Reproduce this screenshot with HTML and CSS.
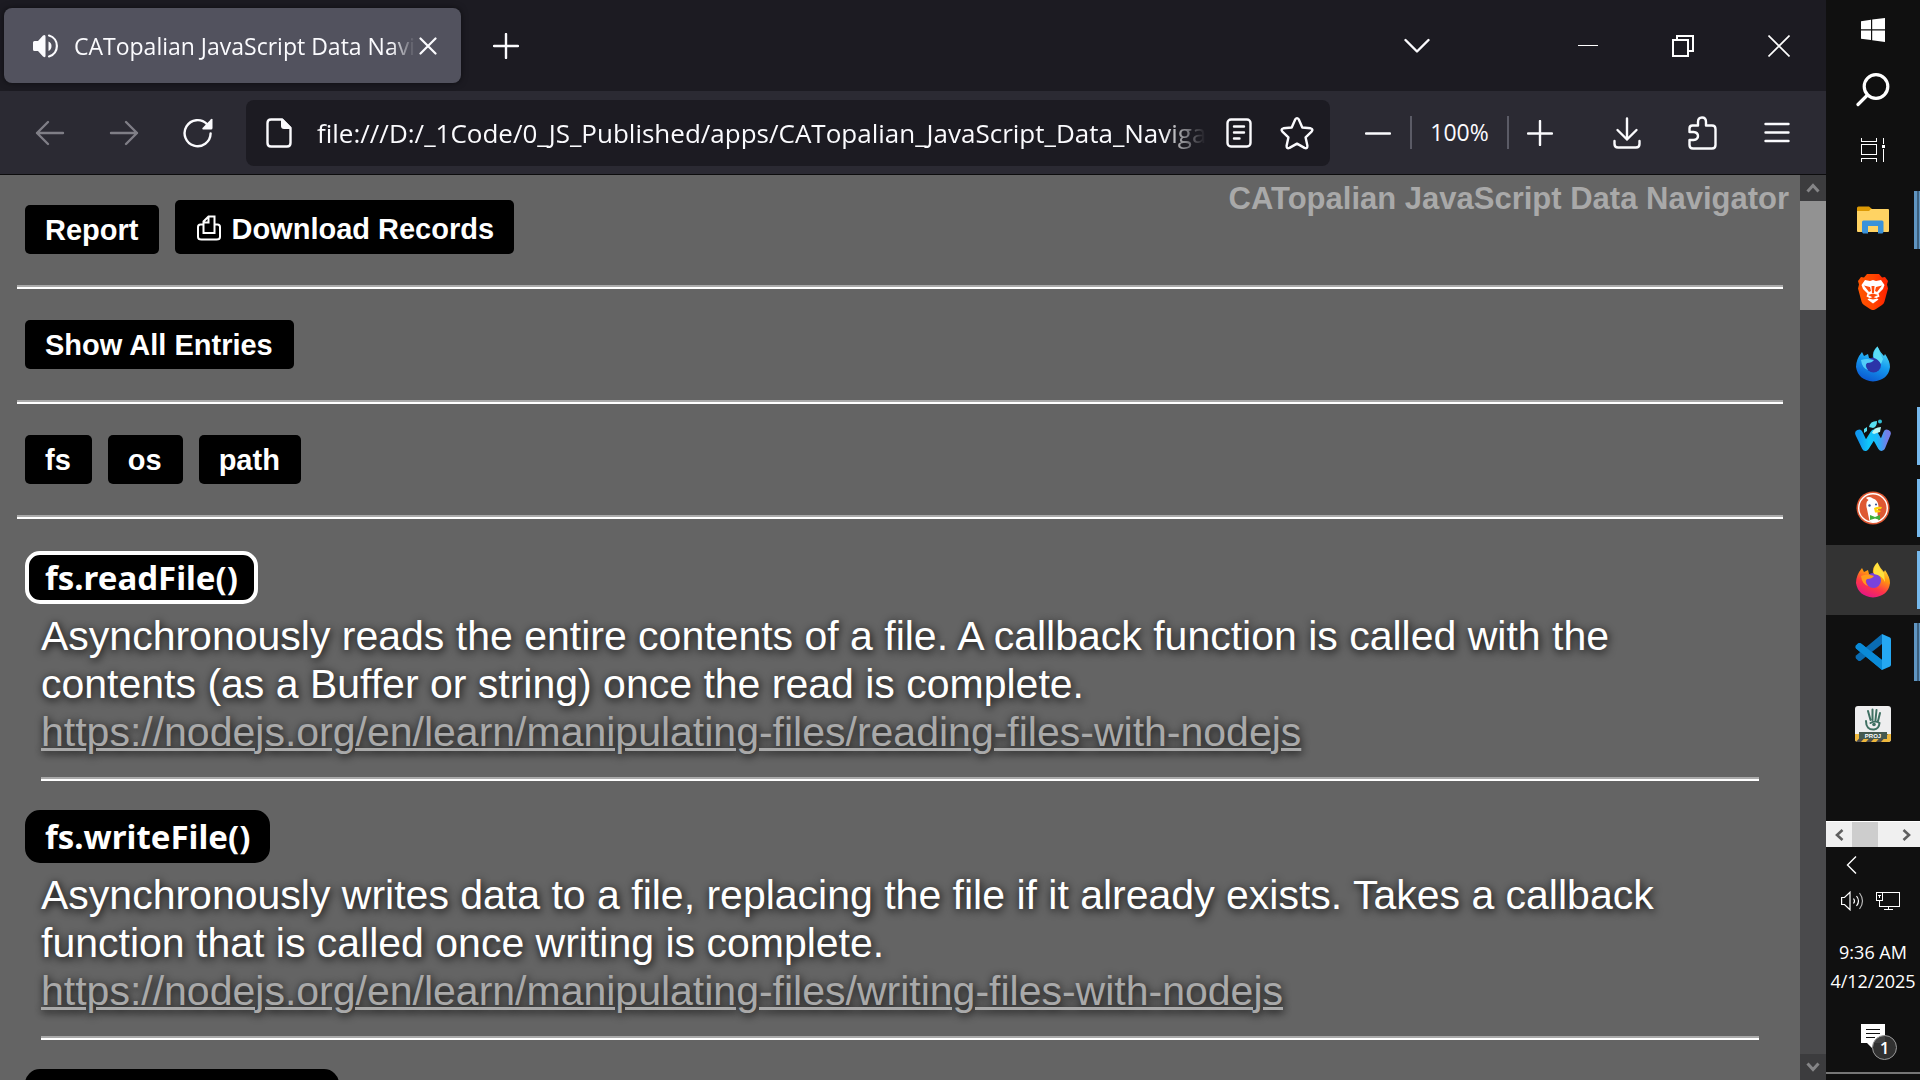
FILE: index.html
```html
<!DOCTYPE html>
<html lang="en">
<head>
<meta charset="utf-8">
<title>CATopalian JavaScript Data Navigator</title>
<link rel="stylesheet" href="styles.css">
</head>
<body>
<div class="browser">
  <header class="tabbar">
    <div class="tab">
      <svg class="ic" width="26" height="26" viewBox="0 0 26 26" aria-hidden="true"><path d="M0 9.500Q0 8 1.500 8H5L10 2.500Q12.500 1 12.500 3.500V23Q12.500 25 10 23.500L5 18H1.500Q0 18 0 16.500Z" fill="#fbfbfe"/><path d="M15.500 8.500v9.500q3-1.500 3-5t-3-4.500Z" fill="#fbfbfe"/><path d="M16 2.500c10.500 3 10.500 18 0 21" fill="none" stroke="#fbfbfe" stroke-width="2.200" stroke-linecap="round"/></svg>
      <span class="tab-title">CATopalian JavaScript Data Navigator</span>
      <button class="bare" aria-label="Close tab"><svg class="ic" width="18" height="18" viewBox="0 0 18 18"><path d="M1.500 1.500l15 15M16.500 1.500l-15 15" stroke="#fbfbfe" stroke-width="2.200" stroke-linecap="round"/></svg></button>
    </div>
    <button class="bare newtab" aria-label="New tab"><svg class="ic" width="26" height="26" viewBox="0 0 26 26"><path d="M13 1v24M1 13h24" stroke="#fbfbfe" stroke-width="2.400" stroke-linecap="round"/></svg></button>
    <div class="window-buttons">
      <button class="bare" aria-label="List all tabs"><svg class="ic" width="26" height="16" viewBox="0 0 26 16"><path d="M1.500 2l11.500 11.500L24.500 2" fill="none" stroke="#fbfbfe" stroke-width="2.400" stroke-linecap="round" stroke-linejoin="round"/></svg></button>
      <button class="bare push" aria-label="Minimize"><svg class="ic" width="20" height="20" viewBox="0 0 20 20"><path d="M0 9.500h20" stroke="#fff"/></svg></button>
      <button class="bare" aria-label="Restore"><svg class="ic" width="22" height="22" viewBox="0 0 22 22" fill="none" stroke="#fff" stroke-width="2"><path d="M1 5h15v16H1zM5 5V1h16v15h-5"/></svg></button>
      <button class="bare" aria-label="Close"><svg class="ic" width="22" height="22" viewBox="0 0 22 22"><path d="M.5.5l21 21M21.500.5l-21 21" stroke="#fff" stroke-width="1.600"/></svg></button>
    </div>
  </header>

  <nav class="toolbar" aria-label="Navigation">
    <div class="nav-buttons">
      <button class="bare" aria-label="Back" disabled><svg class="ic" width="30" height="26" viewBox="0 0 30 26" fill="none" stroke="#7f7e86" stroke-width="2.400" stroke-linecap="round" stroke-linejoin="round"><path d="M28 13H2M13 2L2 13l11 11"/></svg></button>
      <button class="bare" aria-label="Forward" disabled><svg class="ic" width="30" height="26" viewBox="0 0 30 26" fill="none" stroke="#7f7e86" stroke-width="2.400" stroke-linecap="round" stroke-linejoin="round"><path d="M2 13h26M17 2l11 11-11 11"/></svg></button>
      <button class="bare" aria-label="Reload"><svg class="ic" width="30" height="30" viewBox="0 0 30 30"><path d="M27.600 15.500A13 13 0 1 1 24 6.200" fill="none" stroke="#fbfbfe" stroke-width="2.400" stroke-linecap="round"/><path d="M29.500 1.500V10q0 1.500-1.500 1.500H20q-1.200-.5-.5-1.500L28 1.200q1-.8 1.500.3Z" fill="#fbfbfe"/></svg></button>
    </div>
    <div class="urlbar">
      <svg class="ic" width="26" height="30" viewBox="0 0 26 30" aria-hidden="true"><path d="M5 1.500h11L24.500 10v15q0 3.500-3.500 3.500H5q-3.500 0-3.500-3.500V5q0-3.500 3.500-3.500Z" fill="none" stroke="#fbfbfe" stroke-width="2.400"/><path d="M15 1h2l8 8v2h-7q-3 0-3-3Z" fill="#fbfbfe"/></svg>
      <input class="url" type="text" aria-label="Address" value="file:///D:/_1Code/0_JS_Published/apps/CATopalian_JavaScript_Data_Navigator/index.html">
      <button class="bare" aria-label="Reader view"><svg class="ic" width="26" height="30" viewBox="0 0 26 30" fill="none" stroke="#fbfbfe" stroke-width="2.400" stroke-linecap="round"><rect x="1.500" y="1.500" width="23" height="27" rx="3.500"/><path d="M8 8.500h10M8 14.500h10M8 20.500h5.500"/></svg></button>
      <button class="bare" aria-label="Bookmark this page"><svg class="ic" width="34" height="34" viewBox="0 0 34 34"><path d="M15.200 3.500Q17 .8 18.800 3.500L22.300 11.500 30.600 12.300Q33.600 13 31.600 15.600L25.600 21.400 27.400 29.800Q27.500 33 24.500 31.900L17 27.600 9.500 31.900Q6.500 33 6.600 29.800L8.400 21.400 2.400 15.600Q.4 13 3.400 12.300L11.700 11.500Z" fill="none" stroke="#fbfbfe" stroke-width="2.400" stroke-linejoin="round"/></svg></button>
    </div>
    <div class="zoom">
      <button class="bare" aria-label="Zoom out"><svg class="ic" width="26" height="26" viewBox="0 0 26 26"><path d="M1 13.500h24" stroke="#fbfbfe" stroke-width="2.400" stroke-linecap="round"/></svg></button>
      <button class="bare percent">100%</button>
      <button class="bare" aria-label="Zoom in"><svg class="ic" width="26" height="26" viewBox="0 0 26 26"><path d="M13 1v24M1 13.500h24" stroke="#fbfbfe" stroke-width="2.400" stroke-linecap="round"/></svg></button>
    </div>
    <div class="tools">
      <button class="bare" aria-label="Downloads"><svg class="ic" width="28" height="32" viewBox="0 0 28 32" fill="none" stroke="#fbfbfe" stroke-width="2.400" stroke-linecap="round" stroke-linejoin="round"><path d="M14 1.500v21M4.500 13l9.500 9.500 9.500-9.500M1.500 24v3q0 3.500 3.500 3.500h18q3.500 0 3.500-3.500v-3"/></svg></button>
      <button class="bare" aria-label="Extensions"><svg class="ic" width="29" height="34" viewBox="0 0 29 34" fill="none" stroke="#fbfbfe" stroke-width="2.400" stroke-linejoin="round"><path d="M4.500 9.500H10V6q0-4.500 4-4.500T18 6v3.500h6q3.500 0 3.500 3.500v16q0 3.500-3.500 3.500H5q-3.500 0-3.500-3.500V24H5.500q4.500-.5 4.500-4t-4.500-4H1.500V12.500q0-3 3-3Z"/></svg></button>
      <button class="bare" aria-label="Open application menu"><svg class="ic" width="26" height="22" viewBox="0 0 26 22"><path d="M1.500 2h23M1.500 10.500h23M1.500 19h23" stroke="#fbfbfe" stroke-width="2.400" stroke-linecap="round"/></svg></button>
    </div>
  </nav>

  <div class="viewport">
    <main class="page">
      <div class="page-head">
        <div class="row">
          <button class="btn">Report</button>
          <button class="btn download"><svg class="ic" width="24" height="28" viewBox="0 0 24 28" fill="none" stroke="#fff" stroke-width="2" aria-hidden="true"><path d="M6 9.500H3.500Q1 9.500 1 12v10q0 2.500 3.500 2.500h15q3.500 0 3.500-2.500V12q0-2.500-2.500-2.500H18M6.500 18V6.500l5-5H17.500V18ZM7 7.500h4.500V2"/></svg>Download Records</button>
        </div>
        <h1 class="title">CATopalian JavaScript Data Navigator</h1>
      </div>
      <hr class="rule">
      <div class="row group"><button class="btn">Show All Entries</button></div>
      <hr class="rule">
      <div class="row group"><button class="btn">fs</button><button class="btn">os</button><button class="btn">path</button></div>
      <hr class="rule">
      <div class="entries">
        <section class="entry">
          <button class="name selected">fs.readFile()</button>
          <p class="text">Asynchronously reads the entire contents of a file. A callback function is called with the contents (as a Buffer or string) once the read is complete.<br><a href="https://nodejs.org/en/learn/manipulating-files/reading-files-with-nodejs">https://nodejs.org/en/learn/manipulating-files/reading-files-with-nodejs</a></p>
          <hr class="rule inner">
        </section>
        <section class="entry">
          <button class="name">fs.writeFile()</button>
          <p class="text">Asynchronously writes data to a file, replacing the file if it already exists. Takes a callback function that is called once writing is complete.<br><a href="https://nodejs.org/en/learn/manipulating-files/writing-files-with-nodejs">https://nodejs.org/en/learn/manipulating-files/writing-files-with-nodejs</a></p>
          <hr class="rule inner">
        </section>
        <section class="entry">
          <button class="name next" aria-label="Next entry"></button>
        </section>
      </div>
    </main>
    <div class="scrollbar">
      <button class="bare arrow" aria-label="Scroll up"><svg class="ic" width="14" height="12" viewBox="0 0 14 12"><path d="M1.500 9.500L7 3.500l5.500 6" fill="none" stroke="#858587" stroke-width="3"/></svg></button>
      <div class="thumb"></div>
      <button class="bare arrow end" aria-label="Scroll down"><svg class="ic" width="14" height="12" viewBox="0 0 14 12"><path d="M1.500 2.500L7 8.500l5.500-6" fill="none" stroke="#858587" stroke-width="3"/></svg></button>
    </div>
  </div>
</div>

<aside class="taskbar" aria-label="Taskbar">
  <div class="system">
    <button class="bare" aria-label="Start"><svg class="ic" width="24" height="24" viewBox="0 0 24 24" fill="#fff"><path d="M0 3.200L10 1.800V11.300H0zM11.200 1.600L24 0v11.300H11.200zM0 12.500h10V22L0 20.800zM11.200 12.500H24V24l-12.800-1.700z"/></svg></button>
    <button class="bare" aria-label="Search"><svg class="ic" width="34" height="34" viewBox="0 0 34 34" fill="none" stroke="#fff" stroke-width="3.200"><circle cx="20" cy="13.500" r="11.800"/><path d="M11.500 22L2 31.500" stroke-linecap="round"/></svg></button>
    <button class="bare" aria-label="Task view"><svg class="ic" width="24" height="24" viewBox="0 0 24 24" fill="none" stroke="#fff" shape-rendering="crispEdges"><path d="M.5 0v3.500h15V0M.5 6.500h15v10H.5zM.5 24v-3.500h15V24M22.500 0v6M22.500 11v13"/><path d="M21 7h3v3h-3z" fill="#fff" stroke="none"/></svg></button>
  </div>
  <div class="apps">
    <button class="bare app multi" aria-label="File Explorer"><svg class="ic" width="36" height="36" viewBox="0 0 36 36"><path d="M2 6q0-1.500 1.500-1.500H14L17 7v4H2Z" fill="#dd9a05"/><path d="M2 9h12l2-2h17q1 0 1 1v21q0 1-1 1H3q-1 0-1-1Z" fill="#ffd363"/><path d="M7 30V20q0-1.500 1.500-1.500h18.500q1.500 0 1.500 1.500v10l-1 1.500h-4.500V24h-10v7.500H8Z" fill="#3a92da"/></svg></button>
    <button class="bare app" aria-label="Brave"><svg class="ic" width="36" height="36" viewBox="0 0 36 36"><defs><linearGradient id="br"><stop stop-color="#ff5601"/><stop offset=".5" stop-color="#ff4500"/><stop offset="1" stop-color="#ff2000"/></linearGradient></defs><path d="M12 0h12l3 3.500 3-.5 3 4-1 3.500 1 4-3.500 13q-.5 2-2.500 3.500l-6 4-3 1.500-3-1.500-6-4Q7 29.500 6.500 27.500L3 14.500l1-4L3 7l3-4 3 .5Z" fill="url(#br)"/><path d="M10 6l5 1 3-1 3 1 5-1 3.500 5-1.500 4-4.500 4.500 1 3-3 1.500 2 1.500-5.500 4-5.500-4 2-1.500-3-1.500 1-3L8 15l-1.500-4Z" fill="#fff"/><path d="M9 11.500l6 1.500 1 4-2 1zM27 11.500l-6 1.500-1 4 2 1zM16.500 12h3l-.5 7h-2zM13 21l5-1.500 5 1.500-5 2.500zM13.500 24.500l4.500-1.500 4.500 1.500-4.500 1z" fill="#ff4a0a"/></svg></button>
    <button class="bare app" aria-label="Firefox Developer Edition"><svg class="ic" width="36" height="36" viewBox="0 0 36 36"><defs><linearGradient id="fd" x1=".8" y1="0" x2=".4" y2="1"><stop stop-color="#61e5f5"/><stop offset=".5" stop-color="#169df0"/><stop offset="1" stop-color="#0b5ad2"/></linearGradient></defs><path d="M7 6l2 4 4-2 1 4h4q-1-7 4.500-11.500Q25 6 29 10l1-2q5 7 5 13-1.500 13-17 14.500Q3 34 1 21 1 13 7 6Z" fill="url(#fd)"/><circle cx="18.500" cy="19" r="7.500" fill="#2b35a8"/><path d="M6 14q6-2 13 0-2 3-7 3-3 3 1 7-6-2-7-10Z" fill="#52cdfa"/><path d="M19 12q-1-7 3.500-11.500 2 6 5.500 12.500l-2 5q-3-5-7-6Z" fill="#5bdcf8"/></svg></button>
    <button class="bare app running" aria-label="Waterfox"><svg class="ic" width="36" height="36" viewBox="0 0 36 36"><defs><linearGradient id="wf"><stop stop-color="#1198ef"/><stop offset=".35" stop-color="#10c7fb"/><stop offset=".65" stop-color="#1abafa"/><stop offset="1" stop-color="#747de8"/></linearGradient></defs><path d="M4 15.500L10.500 29 19 15.500 26.500 29 32 15.500" fill="none" stroke="url(#wf)" stroke-width="7.500" stroke-linecap="round" stroke-linejoin="round"/><path d="M17 15q2-6 9-6l-1 5-6 2Z" fill="#b8f8f6"/><path d="M14 9q1-6 8-6 0 6-4 7ZM9 11l3-2v4l-3 2Z" fill="#57dff1"/><circle cx="25" cy="3.500" r="2" fill="#31bdd4"/></svg></button>
    <button class="bare app running" aria-label="DuckDuckGo"><svg class="ic" width="36" height="36" viewBox="0 0 36 36"><circle cx="18" cy="18" r="16.500" fill="#de5833"/><circle cx="18" cy="18" r="14.300" fill="none" stroke="#fff" stroke-width="1.400"/><path d="M11 8q3-2 7 .500 5 1.500 5.500 7.500l-1 7 1 9q-5 1.500-9-1L12 19q-2-7 1.500-9Z" fill="#fff"/><path d="M19 18q4-2 8-1l-1 2-5 .5 5 1.500q-1 2-6 1.500Z" fill="#fdd20a"/><circle cx="14.500" cy="15.500" r="1.200" fill="#2d4f8e"/><circle cx="21" cy="14.500" r="1" fill="#2d4f8e"/><path d="M15 25l5 2 5-2v5l-5-1.500-5 1.500Z" fill="#3fae3b"/></svg></button>
    <button class="bare app running active" aria-label="Firefox"><svg class="ic" width="36" height="36" viewBox="0 0 36 36"><defs><linearGradient id="ff" x1=".8" y1="0" x2=".35" y2="1"><stop stop-color="#fff44f"/><stop offset=".4" stop-color="#ff980e"/><stop offset=".7" stop-color="#ff3647"/><stop offset="1" stop-color="#e31587"/></linearGradient></defs><path d="M7 6l2 4 4-2 1 4h4q-1-7 4.500-11.500Q25 6 29 10l1-2q5 7 5 13-1.500 13-17 14.500Q3 34 1 21 1 13 7 6Z" fill="url(#ff)"/><circle cx="18.500" cy="18.500" r="7.500" fill="#7a42dc"/><path d="M6 14q6-3 13 0-2 3-7 3-3 3 1 7-6-2-7-10Z" fill="#ff9b1c"/><path d="M19 12q-1-7 3.500-11.500Q24 7 29 11l1 9q-3-7-11-8Z" fill="#ffe13e"/></svg></button>
    <button class="bare app multi" aria-label="Visual Studio Code"><svg class="ic" width="36" height="36" viewBox="0 0 36 36"><path d="M27 36V26L6 9.500Q4.500 8.500 3 9.500L1 11.500Q0 13 1 14.500Z" fill="#0584cf"/><path d="M27 0v10L6 26.500q-1.500 1-3 0L1 24.500Q0 23 1 21.500Z" fill="#0a6cb2"/><path d="M1 14.500Q0 13 1 11.500L3 9.500q1.500-1 3 0L27 26v10Z" fill="#0a8bd8"/><path d="M27 0l8 3.500q1 .5 1 2v25q0 1.500-1 2L27 36Z" fill="#25a8f2"/></svg></button>
    <button class="bare app" aria-label="Project viewer"><svg class="ic" width="36" height="36" viewBox="0 0 36 36"><rect width="36" height="36" rx="3" fill="#eeeeef"/><path d="M0 28h36v5q0 3-3 3H3q-3 0-3-3Z" fill="#efb83c"/><path d="M1 36l7-8h5l-7 8zM11 36l7-8h5l-7 8zM21 36l7-8h5l-7 8z" fill="#4b4b4b"/><rect x="4" y="26" width="28" height="7" fill="#45594f"/><g fill="none" stroke="#3f7062" stroke-linecap="round" stroke-width="2"><path d="M13 5l2.500 9M17.500 3.500V14M21.500 4L20.500 14M25 7l-2 8M11 15q0 9 8 8.500 5-.5 5.500-6.500-4-3-9 0"/></g><circle cx="19" cy="18.500" r="1.800" fill="#3f7062"/><text x="18" y="32" text-anchor="middle" class="proj">PROJ</text></svg></button>
  </div>
  <div class="hscroll">
    <button class="bare harrow" aria-label="Scroll left"><svg class="ic" width="10" height="12" viewBox="0 0 10 12"><path d="M8.500 1L3 6l5.500 5" fill="none" stroke="#5f5f5f" stroke-width="2.600"/></svg></button>
    <div class="hthumb"></div>
    <button class="bare harrow end" aria-label="Scroll right"><svg class="ic" width="10" height="12" viewBox="0 0 10 12"><path d="M1.500 1L7 6l-5.500 5" fill="none" stroke="#5f5f5f" stroke-width="2.600"/></svg></button>
  </div>
  <div class="tray">
    <button class="bare more" aria-label="Show hidden icons"><svg class="ic" width="11" height="18" viewBox="0 0 11 18"><path d="M10 .5L1.500 9l8.500 8.500" fill="none" stroke="#fff" stroke-width="1.400"/></svg></button>
    <div class="status">
      <button class="bare" aria-label="Volume"><svg class="ic" width="23" height="20" viewBox="0 0 23 20" fill="none" stroke="#fff" stroke-width="1.200"><path d="M.6 6.500H3.500L9 1.200v17.600L3.500 13.500H.6Z"/><path d="M12.500 7.500q2 2.500 0 5M15.500 5q4 5 0 10" /><path d="M18.500 2q6 8 0 16" opacity=".7"/></svg></button>
      <button class="bare" aria-label="Network"><svg class="ic" width="24" height="20" viewBox="0 0 24 20" fill="none" stroke="#fff" shape-rendering="crispEdges"><path d="M6.500 1.500h17v14H3.500V9.500M.5 1.500h6v8H.5zM2 4.500h3M3.500 4v3M12.500 16v2.500M8 18.500h9"/></svg></button>
    </div>
    <div class="clock"><span>9:36 AM</span><span>4/12/2025</span></div>
    <button class="bare notify" aria-label="Notifications"><svg class="ic" width="24" height="26" viewBox="0 0 24 26"><path d="M0 0h24v19H13l-2 5-5-5H0Z" fill="#fff"/><path d="M5 5.500h14M5 9.500h14M5 13.500h9" stroke="#101010"/></svg><span class="badge">1</span></button>
  </div>
  <div class="desktop-edge"></div>
</aside>
</body>
</html>
```
FILE: styles.css
```css
* { box-sizing: border-box; }
body {
  margin: 0;
  height: 100vh;
  display: grid;
  grid-template-columns: minmax(0, 1fr) 94px;
  overflow: hidden;
  background: #101010;
  color: #fbfbfe;
  font-family: "Open Sans", "Noto Sans", sans-serif;
}
.ic { display: block; flex: none; }
.bare {
  margin: 0;
  padding: 0;
  border: 0;
  background: none;
  color: inherit;
  font: inherit;
}

/* Browser chrome */
.browser { display: flex; flex-direction: column; min-width: 0; height: 100vh; }
.tabbar { display: flex; align-items: center; height: 91px; flex: none; padding-left: 4px; background: #1c1b22; }
.tab {
  display: flex;
  align-items: center;
  width: 457px;
  height: 75px;
  padding: 0 24px 0 29px;
  border-radius: 8px;
  background: #52525e;
  box-shadow: 0 0 6px #0008;
}
.tab-title {
  flex: 1;
  min-width: 0;
  margin-left: 15px;
  overflow: hidden;
  white-space: nowrap;
  font-size: 23px;
  line-height: 32px;
  mask-image: linear-gradient(to left, transparent, #000 24px);
}
.tab .bare { margin-left: 4px; }
.newtab { margin-left: 32px; }
.window-buttons { flex: 1; display: flex; justify-content: flex-end; align-items: center; gap: 74px; padding-right: 36px; }
.push { margin-left: 74px; }

.toolbar { display: flex; align-items: center; height: 84px; flex: none; border-bottom: 1px solid #0c0c0d; background: #2b2a33; }
.nav-buttons { display: flex; align-items: center; gap: 44px; padding: 0 33px 0 35px; }
.urlbar {
  flex: 1;
  min-width: 0;
  display: flex;
  align-items: center;
  height: 66px;
  padding: 0 16px 0 20px;
  border-radius: 8px;
  background: #1c1b22;
}
.url {
  flex: 1;
  min-width: 0;
  margin: 0 20px 0 25px;
  padding: 0;
  border: 0;
  background: none;
  color: #fbfbfe;
  font: 26px/36px "Open Sans", "Noto Sans", sans-serif;
  mask-image: linear-gradient(to left, transparent, #000 44px);
}
.urlbar .bare + .bare { margin-left: 28px; }
.zoom { display: flex; align-items: center; padding-left: 35px; }
.percent {
  width: 99px;
  height: 33px;
  margin: 0 18px 0 19px;
  border-left: 2px solid #5b5b66;
  border-right: 2px solid #5b5b66;
  font-size: 23px;
  line-height: 33px;
}
.tools { display: flex; align-items: center; gap: 47px; padding: 0 36px 0 60px; }

/* Page */
.viewport { flex: 1; min-height: 0; display: flex; background: #646464; }
.page { flex: 1; min-width: 0; overflow: hidden; padding: 0 17px; font-family: "Liberation Sans", Arial, sans-serif; color: #fff; }
.page-head { display: flex; justify-content: space-between; align-items: flex-start; margin-right: -6px; padding: 6px 0 31px 8px; }
.row { display: flex; align-items: flex-end; gap: 16px; }
.page-head .row { margin-top: 19px; }
.group { padding: 31px 8px; }
.title { margin: 0; color: #a9a9a9; font-size: 31px; line-height: 36px; }
.btn {
  display: flex;
  align-items: center;
  gap: 10px;
  height: 49px;
  padding: 2px 21px 0 20px;
  border: 0;
  border-radius: 5px;
  background: #000;
  color: #fff;
  font: bold 29px/33px "Liberation Sans", Arial, sans-serif;
}
.download { height: 54px; padding: 4px 20px 0 22px; }
.rule { height: 4px; margin: 0; border: 0; border-top: 2px solid #a9a9a9; background: #fff; }
.entries { padding-top: 32px; }
.entry { margin-bottom: 29px; }
.name {
  display: block;
  height: 53px;
  margin-left: 8px;
  padding: 0 16px;
  border: 4px solid #000;
  border-radius: 15px;
  background: #000;
  color: #fff;
  font: bold 33px/40px "Noto Sans", sans-serif;
}
.selected { border-color: #fff; }
.next { width: 314px; }
.text {
  margin: 8px 24px 21px;
  font-size: 41px;
  line-height: 48px;
  text-shadow: 1px 2px 8px #000;
}
.text a { color: #a9a9a9; text-decoration-thickness: 3px; }
.inner { margin: 0 24px; }

.scrollbar { width: 26px; flex: none; display: flex; flex-direction: column; background: #4a4a4c; }
.arrow { display: grid; place-items: center; height: 26px; background: #3c3c3e; }
.thumb { height: 109px; background: #929292; }
.end { margin-top: auto; }

/* Taskbar */
.taskbar { display: flex; flex-direction: column; height: 100vh; background: #101010; color: #fff; }
.system { display: grid; grid-auto-rows: 60px; padding-bottom: 5px; }
.system .bare { display: grid; place-items: center; }
.apps { display: grid; grid-auto-rows: 70px; gap: 2px; }
.app { position: relative; display: grid; place-items: center; }
.active { background: #333; }
.running::after, .multi::after {
  content: "";
  position: absolute;
  top: 6px;
  right: 0;
  bottom: 6px;
  width: 3px;
  background: #76b9ed;
}
.multi::after { width: 6px; background: linear-gradient(to right, #5f95c2 3px, #3c5f7d 3px, #3c5f7d 5px, #5f95c2 5px); }
.hscroll { display: flex; height: 26px; margin-top: auto; border-top: 1px solid #fff; background: #f0f0f0; }
.harrow { width: 26px; display: grid; place-items: center; }
.hthumb { width: 26px; background: #cdcdcd; }
.hscroll .end { margin: 0 0 0 auto; }
.tray { display: flex; flex-direction: column; align-items: center; padding-top: 9px; }
.more { margin-left: -44px; }
.status { display: flex; gap: 12px; margin-top: 17px; padding-right: 6px; }
.clock { display: flex; flex-direction: column; align-items: center; margin-top: 27px; font-size: 18px; line-height: 29px; }
.notify { position: relative; margin-top: 28px; }
.badge {
  position: absolute;
  left: 11px;
  top: 11px;
  width: 25px;
  height: 25px;
  border: 1px solid #999;
  border-radius: 50%;
  background: #333333ee;
  font-size: 17px;
  font-weight: 600;
  line-height: 23px;
  text-align: center;
}
.desktop-edge { height: 8px; margin-top: 22px; border-top: 2px solid #777; }
.proj { fill: #fff; font: bold 6px "Liberation Sans", sans-serif; }
```
